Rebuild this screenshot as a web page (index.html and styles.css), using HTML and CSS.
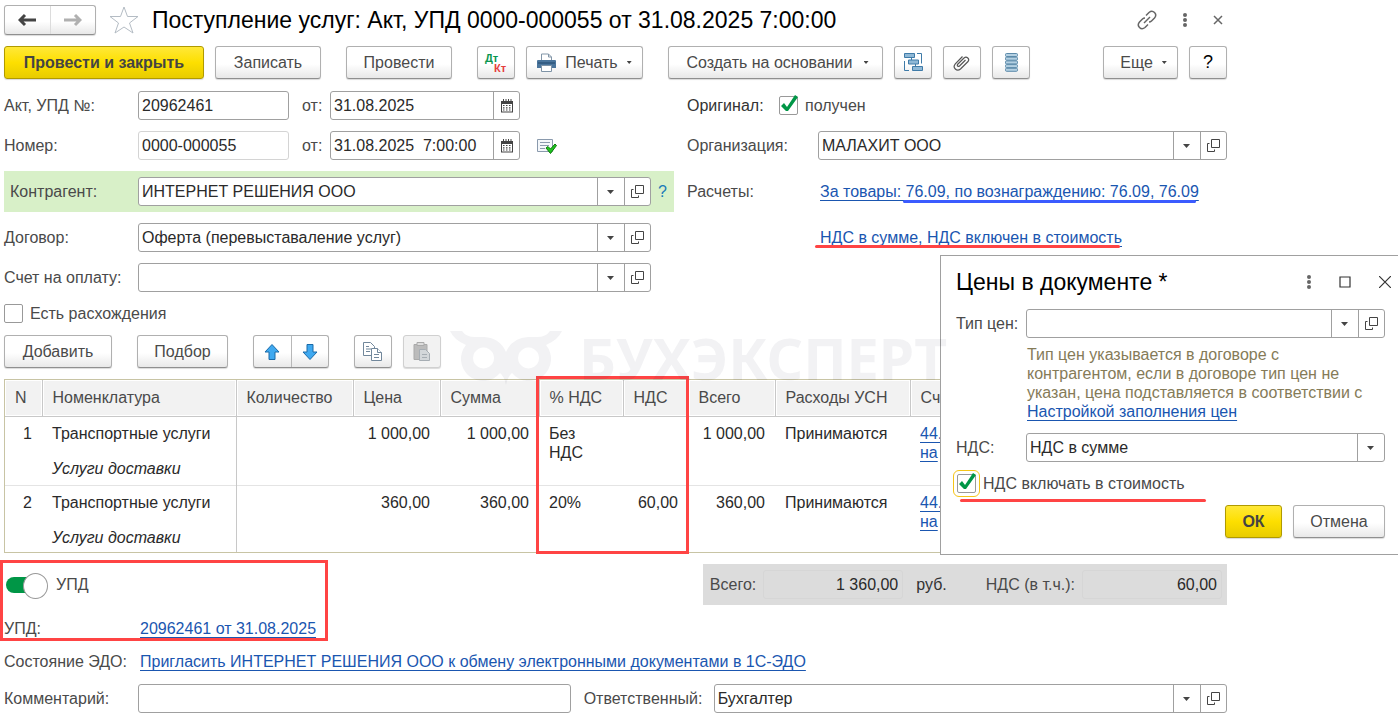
FILE: index.html
```html
<!DOCTYPE html>
<html lang="ru">
<head>
  <meta charset="UTF-8" />
  <meta name="viewport" content="width=device-width, initial-scale=1.0"/>
  <title>Поступление услуг: Акт, УПД</title>
  <link rel="stylesheet" href="styles.css">
</head>
<body>
  <!-- shared icons -->
  <svg class="sprite" aria-hidden="true">
    <symbol id="i-open" viewBox="0 0 13 13"><path d="M4.500.5h8v8h-8zM2.500 4.500h-2v8h7v-2" fill="none" stroke="#444"/></symbol>
    <symbol id="i-calendar" viewBox="0 0 14 14">
      <path d="M1 2h12v11.500H1z" fill="#444"/><path d="M2 5h10v7.500H2z" fill="#fff"/>
      <path d="M3.500 0v3M6 0v3M8.500 0v3M11 0v3" stroke="#444"/>
      <path d="M3 6.500h8M3 8.800h8M3 11h8" stroke="#444" stroke-width="1.200" stroke-dasharray="1.500 1.500"/>
    </symbol>
    <symbol id="i-dots" viewBox="0 0 4 14"><g fill="#666"><circle cx="2" cy="2" r="2"/><circle cx="2" cy="7" r="2"/><circle cx="2" cy="12" r="2"/></g></symbol>
  </svg>

  <main class="document">
    <header class="title-bar">
      <div class="button-pair nav">
        <button type="button" aria-label="Назад"><svg width="18" height="14" viewBox="0 0 18 14"><path d="M7 2L2 7l5 5M2 7h16" fill="none" stroke="#444" stroke-width="3"/></svg></button>
        <button type="button" aria-label="Вперед"><svg width="18" height="14" viewBox="0 0 18 14"><path d="M11 2l5 5-5 5M16 7H0" fill="none" stroke="#b0b0b0" stroke-width="3"/></svg></button>
      </div>
      <button type="button" class="plain star" aria-label="В избранное"><svg width="30" height="28" viewBox="0 0 30 28"><path d="M15 1l3.500 9.500H29l-8.500 6.500 3.500 10-9-6-9 6 3.500-10L1 10.500h10.500z" fill="none" stroke="#b4bcc4"/></svg></button>
      <h1>Поступление услуг: Акт, УПД 0000-000055 от 31.08.2025 7:00:00</h1>
      <div class="window-tools">
        <button type="button" class="plain" aria-label="Ссылка"><svg width="20" height="20" viewBox="0 0 20 20"><g fill="none" stroke="#666" stroke-width="1.500"><path d="M9 5.500l3-3q3-2.500 5.500 0t0 5.500l-3 3q-1 1-2.500 1"/><path d="M11 14.500l-3 3q-3 2.500-5.500 0t0-5.500l3-3q1-1 2.500-1"/><path d="M7 13l6-6"/></g></svg></button>
        <button type="button" class="plain" aria-label="Меню"><svg width="4" height="14"><use href="#i-dots"/></svg></button>
        <button type="button" class="plain" aria-label="Закрыть"><svg width="10" height="10" viewBox="0 0 10 10"><path d="M1 1l8 8M9 1L1 9" stroke="#666" stroke-width="1.500"/></svg></button>
      </div>
    </header>

    <div class="toolbar">
      <button type="button" class="btn primary post">Провести и закрыть</button>
      <button type="button" class="btn medium">Записать</button>
      <button type="button" class="btn medium group">Провести</button>
      <button type="button" class="btn icon group dtkt" aria-label="Дт Кт"><span class="dt">Дт</span><span class="kt">Кт</span></button>
      <button type="button" class="btn print">
        <svg width="19" height="19" viewBox="0 0 19 19"><path d="M4.500 8V1h7l3 3v4" fill="#fff" stroke="#8296a8"/><path d="M11.500 1v3h3" fill="none" stroke="#8296a8"/><path d="M1 7h17q1 0 1 1v7H0V8q0-1 1-1z" fill="#4a759c"/><path d="M1 10h17" stroke="#20486c"/><path d="M4.500 12.500h10v6h-10z" fill="#fff" stroke="#7e93a6"/></svg>
        Печать <span class="caret"></span>
      </button>
      <button type="button" class="btn create group">Создать на основании <span class="caret"></span></button>
      <button type="button" class="btn icon" aria-label="Структура подчиненности"><svg width="19" height="19" viewBox="0 0 19 19"><g fill="#8fb8d6" stroke="#3f7ba8"><path d="M.5.500h10v4H.5zM4.500 7h10v4h-10zM8.500 13.500h10v4h-10z"/><path d="M7.500 5v2M11.500 11v2.500M13 .5h4.500v10M5 17.500H.5V8" fill="none"/></g></svg></button>
      <button type="button" class="btn icon" aria-label="Файлы"><svg width="18" height="18" viewBox="0 0 18 18"><path d="M12.500 6l-6 6q-1 .8-1.800 0t0-1.800l6.300-6.200q2-1.600 3.800 0t0 3.800l-7.300 7.200q-2.800 2.200-5.200 0t0-5.200L9.500 2.500" fill="none" stroke="#555" stroke-width="1.200"/></svg></button>
      <button type="button" class="btn icon" aria-label="Список"><svg width="13" height="19" viewBox="0 0 13 19"><g fill="#b4d0e2" stroke="#5c8aaa"><rect x=".5" y=".5" width="12" height="3" rx="1"/><rect x=".5" y="4.200" width="12" height="3" rx="1"/><rect x=".5" y="7.900" width="12" height="3" rx="1"/><rect x=".5" y="11.600" width="12" height="3" rx="1"/><rect x=".5" y="15.300" width="12" height="3" rx="1"/></g></svg></button>
      <button type="button" class="btn more">Еще <span class="caret"></span></button>
      <button type="button" class="btn icon help">?</button>
    </div>

    <form class="form">
      <div class="column">
        <div class="row">
          <label class="caption" for="act">Акт, УПД №:</label>
          <input class="field number" type="text" id="act" value="20962461">
          <label class="from" for="act-date">от:</label>
          <div class="field date">
            <input type="text" id="act-date" value="31.08.2025">
            <button type="button" aria-label="Календарь"><svg width="14" height="14"><use href="#i-calendar"/></svg></button>
          </div>
        </div>
        <div class="row">
          <label class="caption" for="num">Номер:</label>
          <input class="field number readonly" type="text" id="num" value="0000-000055" readonly>
          <label class="from" for="num-date">от:</label>
          <div class="field date">
            <input type="text" id="num-date" value="31.08.2025&nbsp; 7:00:00">
            <button type="button" aria-label="Календарь"><svg width="14" height="14"><use href="#i-calendar"/></svg></button>
          </div>
          <svg class="posted" width="20" height="16" viewBox="0 0 20 16"><path d="M.5 1.500h15v12H.5z" fill="#f4f7fa" stroke="#8a9aad"/><path d="M3 4.500h10M3 7.500h9M3 10.500h5" stroke="#8a9aad"/><path d="M9 10l2-1.500 2.500 2.500L18 6l1.500 1.500L13.500 15.500z" fill="#1fc41f" stroke="#0c7a0c"/></svg>
        </div>
        <div class="row highlight">
          <label class="caption" for="partner">Контрагент:</label>
          <div class="field picker">
            <div class="drop"><select id="partner"><option>ИНТЕРНЕТ РЕШЕНИЯ ООО</option></select></div>
            <button type="button" aria-label="Открыть"><svg width="13" height="13"><use href="#i-open"/></svg></button>
          </div>
          <a class="hint" href="#">?</a>
        </div>
        <div class="row inset">
          <label class="caption" for="contract">Договор:</label>
          <div class="field picker">
            <div class="drop"><select id="contract"><option>Оферта (перевыставаление услуг)</option></select></div>
            <button type="button" aria-label="Открыть"><svg width="13" height="13"><use href="#i-open"/></svg></button>
          </div>
        </div>
        <div class="row inset">
          <label class="caption" for="invoice">Счет на оплату:</label>
          <div class="field picker">
            <div class="drop"><select id="invoice"><option></option></select></div>
            <button type="button" aria-label="Открыть"><svg width="13" height="13"><use href="#i-open"/></svg></button>
          </div>
        </div>
        <label class="check"><input type="checkbox"> Есть расхождения</label>
      </div>

      <div class="column">
        <div class="row">
          <span class="original">Оригинал:</span>
          <label class="check"><input type="checkbox" checked> получен</label>
        </div>
        <div class="row">
          <label class="caption-right" for="org">Организация:</label>
          <div class="field picker">
            <div class="drop"><select id="org"><option>МАЛАХИТ ООО</option></select></div>
            <button type="button" aria-label="Открыть"><svg width="13" height="13"><use href="#i-open"/></svg></button>
          </div>
        </div>
        <div class="row tall">
          <span class="caption-right">Расчеты:</span>
          <a class="link" href="#">За товары: <span class="mark-blue">76.09, по вознаграждению: 76.09, 76.09</span></a>
        </div>
        <div class="row">
          <span class="caption-right"></span>
          <a class="link mark-red" href="#">НДС в сумме, НДС включен в стоимость</a>
        </div>
      </div>
    </form>

    <div class="toolbar lines-toolbar">
      <button type="button" class="btn add">Добавить</button>
      <button type="button" class="btn pick group">Подбор</button>
      <div class="button-pair move group">
        <button type="button" aria-label="Вверх"><svg width="16" height="16" viewBox="0 0 16 16"><path d="M8 .5L15 8h-4v7.500H5V8H1z" fill="#3fa9f0" stroke="#1a6aa8"/></svg></button>
        <button type="button" aria-label="Вниз"><svg width="16" height="16" viewBox="0 0 16 16"><path d="M8 15.500L15 8h-4V.5H5V8H1z" fill="#3fa9f0" stroke="#1a6aa8"/></svg></button>
      </div>
      <button type="button" class="btn icon group" aria-label="Копировать"><svg width="20" height="19" viewBox="0 0 20 19"><g fill="#fff" stroke="#71879b"><path d="M.5.500h7l4 4v9H.5z"/><path d="M3 4.500h3M3 7h5M3 9.500h4"/><path d="M8.500 6.500h6l4 4v8h-10z"/><path d="M14.500 6.500v4h4M11 12.500h5M11 15.500h5"/></g></svg></button>
      <button type="button" class="btn icon" aria-label="Вставить" disabled><svg width="18" height="19" viewBox="0 0 18 19"><path d="M1 2.500h13v15H1z" fill="#bbb" stroke="#aaa"/><path d="M4 .5h7v3H4z" fill="#ddd" stroke="#aaa"/><path d="M6.500 7.500h6l4 4v7h-10z" fill="#d3d7da" stroke="#a6adb3"/><path d="M9 12.500h5M9 15.500h5" stroke="#a6adb3"/></svg></button>
    </div>

    <div class="lines">
      <table>
        <colgroup>
          <col class="c-n"><col class="c-item"><col class="c-qty"><col class="c-price"><col class="c-sum">
          <col class="c-rate"><col class="c-vat"><col class="c-total"><col class="c-usn"><col>
        </colgroup>
        <thead>
          <tr><th>N</th><th>Номенклатура</th><th>Количество</th><th>Цена</th><th>Сумма</th><th>% НДС</th><th>НДС</th><th>Всего</th><th>Расходы УСН</th><th>Счета учета</th></tr>
        </thead>
        <tbody>
          <tr>
            <td class="num">1</td>
            <td class="item">Транспортные услуги<em>Услуги доставки</em></td>
            <td></td>
            <td class="num">1 000,00</td>
            <td class="num">1 000,00</td>
            <td>Без<br>НДС</td>
            <td></td>
            <td class="num">1 000,00</td>
            <td>Принимаются</td>
            <td><a href="#">44.01<br>на</a></td>
          </tr>
          <tr>
            <td class="num">2</td>
            <td class="item">Транспортные услуги<em>Услуги доставки</em></td>
            <td></td>
            <td class="num">360,00</td>
            <td class="num">360,00</td>
            <td>20%</td>
            <td class="num">60,00</td>
            <td class="num">360,00</td>
            <td>Принимаются</td>
            <td><a href="#">44.01<br>на</a></td>
          </tr>
        </tbody>
      </table>
      <div class="frame frame-vat"></div>
    </div>

    <section class="footer">
      <div class="frame frame-upd"></div>
      <div class="summary">
        <label class="toggle"><input type="checkbox" checked> УПД</label>
        <div class="totals">
          <label for="total">Всего:</label>
          <input type="text" id="total" value="1 360,00" readonly>
          <span class="currency">руб.</span>
          <label for="vat-total">НДС (в т.ч.):</label>
          <input type="text" id="vat-total" value="60,00" readonly>
        </div>
      </div>
      <div class="text-row">
        <span class="caption">УПД:</span>
        <a class="link" href="#">20962461 от 31.08.2025</a>
      </div>
      <div class="text-row">
        <span class="caption">Состояние ЭДО:</span>
        <a class="link" href="#">Пригласить ИНТЕРНЕТ РЕШЕНИЯ ООО к обмену электронными документами в 1С-ЭДО</a>
      </div>
      <div class="row">
        <label class="caption" for="comment">Комментарий:</label>
        <input class="field comment" type="text" id="comment">
        <label class="caption-resp" for="resp">Ответственный:</label>
        <div class="field picker resp">
          <div class="drop"><select id="resp"><option>Бухгалтер</option></select></div>
          <button type="button" aria-label="Открыть"><svg width="13" height="13"><use href="#i-open"/></svg></button>
        </div>
      </div>
    </section>
  </main>

  <section class="dialog" role="dialog" aria-labelledby="dialog-title">
    <header class="dialog-head">
      <h2 id="dialog-title">Цены в документе *</h2>
      <button type="button" class="plain" aria-label="Меню"><svg width="4" height="14"><use href="#i-dots"/></svg></button>
      <button type="button" class="plain" aria-label="Развернуть"><svg width="12" height="12" viewBox="0 0 12 12"><path d="M1 1h10v10H1z" fill="none" stroke="#333" stroke-width="1.200"/></svg></button>
      <button type="button" class="plain" aria-label="Закрыть"><svg width="12" height="12" viewBox="0 0 12 12"><path d="M0 0l12 12M12 0L0 12" stroke="#333" stroke-width="1.200"/></svg></button>
    </header>
    <div class="row">
      <label class="caption-dialog" for="price-type">Тип цен:</label>
      <div class="field picker">
        <div class="drop"><select id="price-type"><option></option></select></div>
        <button type="button" aria-label="Открыть"><svg width="13" height="13"><use href="#i-open"/></svg></button>
      </div>
    </div>
    <p class="note">Тип цен указывается в договоре с<br>контрагентом, если в договоре тип цен не<br>указан, цена подставляется в соответствии с<br><a href="#">Настройкой заполнения цен</a></p>
    <div class="row">
      <label class="caption-dialog" for="vat-mode">НДС:</label>
      <div class="field picker">
        <div class="drop"><select id="vat-mode"><option>НДС в сумме</option></select></div>
      </div>
    </div>
    <label class="check focused mark-check"><input type="checkbox" checked> НДС включать в стоимость</label>
    <div class="dialog-actions">
      <button type="button" class="btn primary ok">ОК</button>
      <button type="button" class="btn cancel">Отмена</button>
    </div>
  </section>

  <div class="watermark" aria-hidden="true">
    <svg width="112" height="54" viewBox="0 0 112 54"><path fill-rule="evenodd" d="M0 0H12Q16 6 25 6H34Q50 7 56 21 62 7 78 6H87Q96 6 100 0H112Q108 9 96 14A22 22 0 0 1 62 42Q58 45 56 54 54 45 50 42A22 22 0 0 1 16 14Q4 9 0 0zM33.500 16.500a10.500 10.500 0 1 0 .1 0zM78.500 16.500a10.500 10.500 0 1 0 .1 0z"/></svg>
    <span>БУХЭКСПЕРТ</span>
  </div>
</body>
</html>
```
FILE: styles.css
```css
* {
  box-sizing: border-box;
}

body {
  margin: 0;
  position: relative;
  background: #fff;
  color: #4a4a4a;
  font-family: "Liberation Sans", Arial, sans-serif;
  font-size: 16px;
  line-height: 19px;
  overflow-x: hidden;
}

input,
select,
button {
  margin: 0;
  font: inherit;
  color: inherit;
}

.sprite {
  display: none;
}

.document {
  padding: 5px 171px 6px 4px;
}

.plain {
  display: flex;
  padding: 0;
  border: none;
  background: none;
}

/* title */
.title-bar {
  display: flex;
  align-items: center;
  height: 30px;
}

.title-bar h1 {
  margin: 0 0 0 13px;
  font-size: 23px;
  line-height: 28px;
  font-weight: normal;
  color: #000;
  white-space: nowrap;
}

.star {
  margin-left: 13px;
}

.window-tools {
  display: flex;
  align-items: center;
  gap: 26px;
  margin-left: auto;
  padding-right: 4px;
}

/* buttons */
.toolbar {
  display: flex;
  gap: 11px;
  margin-top: 11px;
}

.lines-toolbar {
  margin-top: 12px;
}

.toolbar .group {
  margin-left: 14px;
}

.btn,
.button-pair {
  display: flex;
  align-items: center;
  justify-content: center;
  height: 33px;
  padding: 0;
  border: 1px solid #b0b0b0;
  border-bottom-color: #8f8f8f;
  border-radius: 3px;
  background: linear-gradient(#fff 55%, #e8e8e8);
  box-shadow: 0 1px 1px rgba(0, 0, 0, 0.15);
  white-space: nowrap;
}

.btn:disabled {
  border-color: #d0d0d0;
  background: #f2f2f2;
}

.btn.primary {
  border-color: #b09a00;
  background: linear-gradient(#ffe838, #fddf00 50%, #e8cc00);
  font-weight: bold;
  color: #444;
}

.button-pair button {
  display: flex;
  flex: 1;
  align-items: center;
  justify-content: center;
  height: 100%;
  padding: 0;
  border: none;
  background: none;
}

.button-pair button + button {
  border-left: 1px solid #b8b8b8;
}

.nav {
  width: 92px;
  height: 30px;
}

.nav button + button {
  border-left-color: #dcdcdc;
}

.post { width: 200px; }
.medium { width: 106px; }
.icon { width: 38px; }
.print { width: 117px; gap: 9px; }
.create { width: 215px; gap: 11px; padding-left: 4px; }
.more { width: 75px; gap: 9px; padding-left: 6px; margin-left: auto; }
.help { color: #000; font-size: 18px; }
.add { width: 108px; }
.pick { width: 91px; }
.move { width: 76px; }
.ok { width: 57px; }
.cancel { width: 92px; }

.dtkt {
  flex-direction: column;
  font-size: 11px;
  line-height: 10px;
  font-weight: bold;
}

.dt {
  padding-right: 9px;
  color: #0a9650;
}

.kt {
  padding-left: 8px;
  color: #e53e3e;
}

.caret {
  width: 5px;
  height: 3px;
  background: #444;
  clip-path: polygon(0 0, 100% 0, 50% 100%);
}

/* form rows */
.form {
  display: grid;
  grid-template-columns: minmax(0, 670fr) minmax(0, 540fr);
  gap: 13px;
  margin-top: 12px;
}

.column {
  display: flex;
  flex-direction: column;
  gap: 11px;
}

.row {
  display: flex;
  align-items: center;
  min-height: 29px;
  white-space: nowrap;
}

.row.inset {
  padding-right: 23px;
}

.row.tall {
  min-height: 41px;
}

.row.highlight {
  padding: 6px 0 6px 6px;
  background: #d8f0c8;
}

.caption {
  flex: none;
  width: 134px;
}

.highlight .caption {
  width: 128px;
}

.caption-right {
  flex: none;
  width: 131px;
}

.caption-dialog {
  flex: none;
  width: 70px;
}

.caption-resp {
  flex: none;
  width: 143px;
  padding-left: 13px;
}

.original {
  width: 92px;
  color: #333;
}

.field {
  height: 29px;
  border: 1px solid #a0a0a0;
  border-radius: 3px;
  background: #fff;
  color: #2a2a2a;
}

input.field {
  padding: 0 3px;
}

.number {
  width: 151px;
}

.readonly {
  border-color: #d4d4d4;
}

.from {
  width: 41px;
  padding-left: 13px;
}

.date {
  display: flex;
  width: 190px;
}

.date input {
  flex: 1;
  min-width: 0;
  padding: 0 3px;
  border: none;
  background: none;
}

.date button,
.picker button {
  display: flex;
  flex: none;
  align-items: center;
  justify-content: center;
  width: 26px;
  padding: 0;
  border: none;
  border-left: 1px solid #a0a0a0;
  background: none;
}

.posted {
  margin-left: 17px;
}

.picker {
  display: flex;
  flex: 1;
  min-width: 0;
}

.drop {
  position: relative;
  display: flex;
  flex: 1;
  min-width: 0;
}

.drop select {
  flex: 1;
  min-width: 0;
  padding: 0 30px 0 3px;
  border: none;
  background: none;
  appearance: none;
}

/* arrow part of the drop-down */
.drop::before,
.drop::after {
  content: "";
  position: absolute;
  pointer-events: none;
}

.drop::before {
  top: 0;
  right: 0;
  bottom: 0;
  width: 26px;
  border-left: 1px solid #a0a0a0;
}

.drop::after {
  top: 12px;
  right: 10px;
  width: 7px;
  height: 4px;
  background: #444;
  clip-path: polygon(0 0, 100% 0, 50% 100%);
}

.hint {
  width: 23px;
  padding-left: 7px;
  color: #1a7ab8;
  text-decoration: none;
}

a {
  color: #1a56b0;
  text-underline-offset: 3px;
  text-decoration-skip-ink: none;
  text-decoration-thickness: 1px;
}

.link {
  position: relative;
  padding-left: 2px;
}

.mark-blue {
  position: relative;
}

.mark-blue::after,
.mark-red::after,
.mark-check::after {
  content: "";
  position: absolute;
  height: 3px;
  border-radius: 2px;
  background: #ff4444;
}

.mark-blue::after {
  left: -3px;
  right: 3px;
  bottom: -3px;
  background: #3b5bff;
}

.mark-red::after {
  left: -3px;
  right: 2px;
  bottom: -1px;
}

/* checkboxes */
.check {
  display: flex;
  align-items: center;
  gap: 7px;
}

.column > .check {
  padding-top: 1px;
}

.check input {
  position: relative;
  width: 19px;
  height: 19px;
  border: 1px solid #999;
  border-radius: 2px;
  background: #fff;
  appearance: none;
}

.check input:checked::before {
  content: "";
  position: absolute;
  inset: -2px;
  background: #009646;
  clip-path: polygon(3px 11px, 6px 8px, 9px 12px, 17px 0, 20px 2px, 10px 16px, 8px 16px);
}

/* lines table */
.lines {
  position: relative;
  margin-top: 11px;
  border: 1px solid #c8c4a4;
}

.lines table {
  width: 100%;
  table-layout: fixed;
  border-collapse: collapse;
}

.c-n { width: 37px; }
.c-item { width: 194px; }
.c-qty { width: 117px; }
.c-price { width: 87px; }
.c-sum { width: 99px; }
.c-rate { width: 84px; }
.c-vat { width: 65px; }
.c-total { width: 87px; }
.c-usn { width: 135px; }

.lines th {
  height: 36px;
  padding: 0 10px;
  border-right: 1px solid #c8c8c8;
  border-bottom: 1px solid #c8c8c8;
  background: #f2f2f2;
  box-shadow: inset 0 0 0 1px #fff;
  font-weight: normal;
  text-align: left;
  white-space: nowrap;
}

.lines td {
  height: 69px;
  padding: 7px 10px 5px;
  vertical-align: top;
  color: #2a2a2a;
}

.lines tr + tr td {
  height: 67px;
  border-top: 1px solid #e4e4e4;
}

.lines .num {
  padding-left: 0;
  text-align: right;
  white-space: nowrap;
}

.lines .item {
  border-right: 1px solid #c8c8c8;
  white-space: nowrap;
}

.item em {
  display: block;
  margin-top: 16px;
}

.frame {
  position: absolute;
  border: 3px solid #ff4444;
  pointer-events: none;
}

.frame-vat {
  top: -4px;
  left: 531px;
  width: 153px;
  bottom: -2px;
}

/* footer */
.footer {
  position: relative;
  padding-top: 11px;
}

.frame-upd {
  top: 7px;
  left: -4px;
  width: 328px;
  height: 81px;
}

.summary {
  display: flex;
  justify-content: space-between;
}

.toggle {
  display: flex;
  align-items: center;
  gap: 8px;
  padding-left: 2px;
}

.toggle input {
  position: relative;
  width: 42px;
  height: 16px;
  border-radius: 8px;
  background: linear-gradient(to right, #009646 30px, transparent 30px);
  appearance: none;
}

.toggle input::before {
  content: "";
  position: absolute;
  top: -4px;
  right: 0;
  width: 23px;
  height: 24px;
  border: 1px solid #999;
  border-radius: 50%;
  background: #fff;
}

.totals {
  display: flex;
  align-items: center;
  height: 41px;
  padding: 0 5px 0 7px;
  background: #dcdcdc;
}

.totals input {
  width: 140px;
  height: 29px;
  margin-left: 7px;
  padding: 0 4px;
  border: 1px solid #d6d6d6;
  border-radius: 3px;
  background: none;
  color: #2a2a2a;
  text-align: right;
}

.currency {
  margin: 0 39px 0 13px;
  color: #333;
}

.text-row {
  display: flex;
  margin-top: 14px;
}

.footer .row {
  margin-top: 13px;
}

.comment {
  flex: 426;
  min-width: 0;
}

.resp {
  flex: 513;
}

/* price settings window */
.dialog {
  position: absolute;
  top: 255px;
  right: 0;
  width: 458px;
  padding: 12px 13px 16px 15px;
  border: 1px solid #a0a0a0;
  border-right: none;
  background: #fff;
}

.dialog-head {
  display: flex;
  align-items: center;
  gap: 28px;
  height: 28px;
  margin-bottom: 13px;
}

.dialog-head h2 {
  flex: 1;
  margin: 0;
  font-size: 23px;
  line-height: 28px;
  font-weight: normal;
  color: #000;
}

.dialog-head .plain:last-child {
  margin-right: -6px;
}

.note {
  margin: 7px 0 12px 71px;
  color: #857b58;
  white-space: nowrap;
}

.dialog .check {
  position: relative;
  gap: 3px;
  margin: 8px 0 8px -3px;
}

.focused input {
  margin: 4px;
  outline: 1px solid #f5c518;
  outline-offset: 3px;
}

.mark-check::after {
  left: 7px;
  bottom: -5px;
  width: 246px;
}

.dialog-actions {
  display: flex;
  justify-content: flex-end;
  gap: 11px;
}

/* watermark over the page */
.watermark {
  position: absolute;
  top: 331px;
  left: 450px;
  display: flex;
  gap: 17px;
  color: rgba(40, 40, 70, 0.06);
  fill: rgba(40, 40, 70, 0.06);
  font-family: "Noto Sans", sans-serif;
  font-size: 57px;
  line-height: 54px;
  font-weight: bold;
  pointer-events: none;
}
```
